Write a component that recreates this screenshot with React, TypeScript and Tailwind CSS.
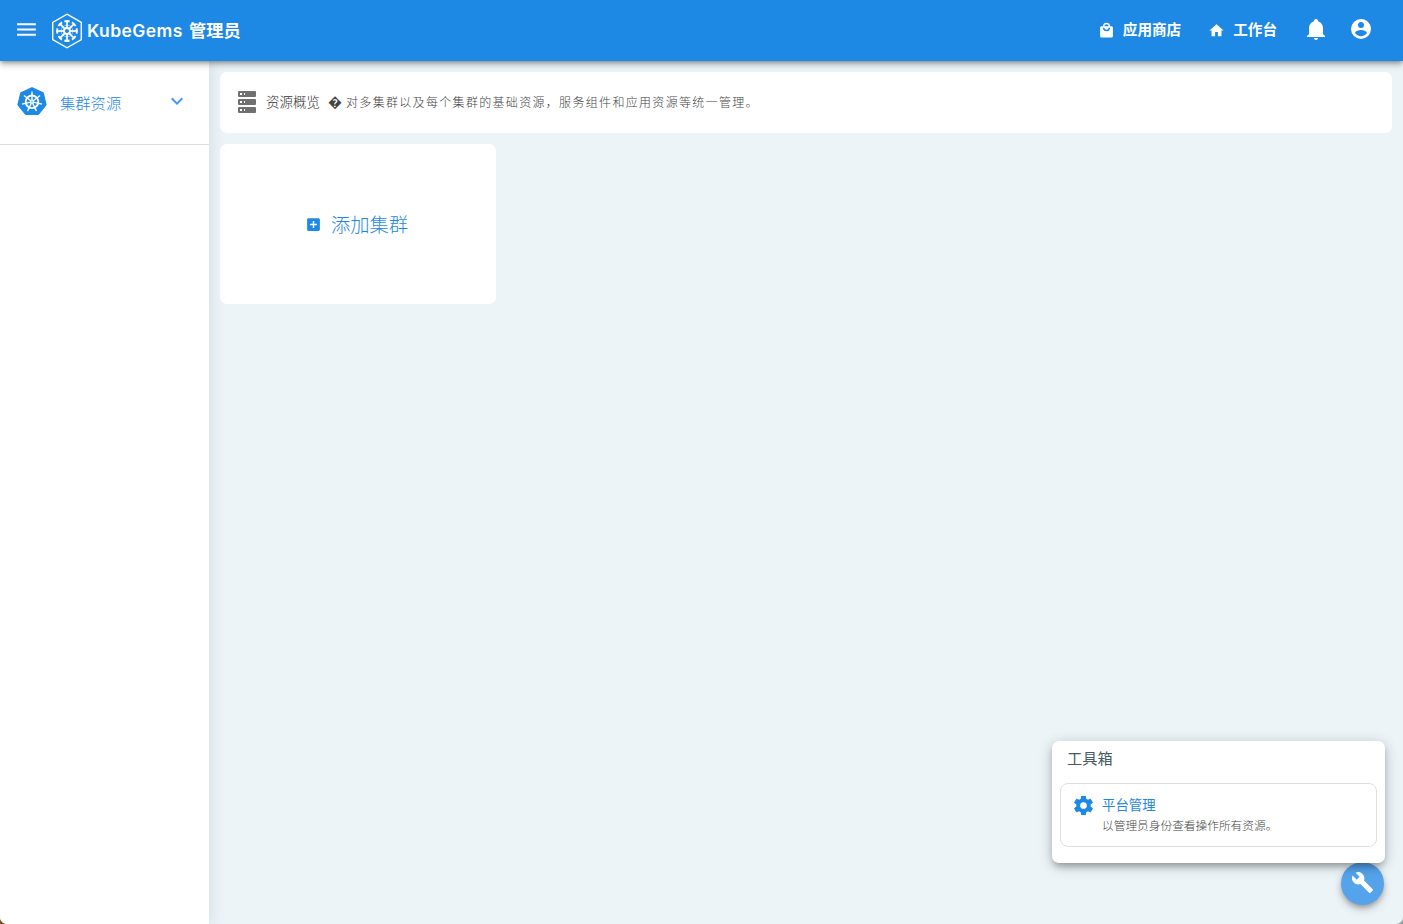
import clsx from 'clsx';

const icons = {
  menu: 'M3,6H21V8H3V6M3,11H21V13H3V11M3,16H21V18H3V16Z',
  shopping:
    'M12,13A5,5 0 0,1 7,8H9A3,3 0 0,0 12,11A3,3 0 0,0 15,8H17A5,5 0 0,1 12,13M12,3A3,3 0 0,1 15,6H9A3,3 0 0,1 12,3M19,6H17A5,5 0 0,0 12,1A5,5 0 0,0 7,6H5C3.89,6 3,6.89 3,8V20A2,2 0 0,0 5,22H19A2,2 0 0,0 21,20V8C21,6.89 20.1,6 19,6Z',
  home: 'M10,20V14H14V20H19V12H22L12,3L2,12H5V20H10Z',
  bell: 'M21,19V20H3V19L5,17V11C5,7.9 7.03,5.17 10,4.29C10,4.19 10,4.1 10,4A2,2 0 0,1 12,2A2,2 0 0,1 14,4C14,4.1 14,4.19 14,4.29C16.97,5.17 19,7.9 19,11V17L21,19M14,21A2,2 0 0,1 12,23A2,2 0 0,1 10,21',
  account:
    'M12,19.2C9.5,19.2 7.29,17.92 6,16C6.03,14 10,12.9 12,12.9C14,12.9 17.97,14 18,16C16.71,17.92 14.5,19.2 12,19.2M12,5A3,3 0 0,1 15,8A3,3 0 0,1 12,11A3,3 0 0,1 9,8A3,3 0 0,1 12,5M12,2A10,10 0 0,0 2,12A10,10 0 0,0 12,22A10,10 0 0,0 22,12C22,6.47 17.5,2 12,2Z',
  chevronDown: 'M7.41,8.58L12,13.17L16.59,8.58L18,10L12,16L6,10L7.41,8.58Z',
  server:
    'M4,1H20A1,1 0 0,1 21,2V6A1,1 0 0,1 20,7H4A1,1 0 0,1 3,6V2A1,1 0 0,1 4,1M4,9H20A1,1 0 0,1 21,10V14A1,1 0 0,1 20,15H4A1,1 0 0,1 3,14V10A1,1 0 0,1 4,9M4,17H20A1,1 0 0,1 21,18V22A1,1 0 0,1 20,23H4A1,1 0 0,1 3,22V18A1,1 0 0,1 4,17M9,5H10V3H9V5M9,13H10V11H9V13M9,21H10V19H9V21M5,3V5H7V3H5M5,11V13H7V11H5M5,19V21H7V19H5Z',
  plusBox:
    'M17,13H13V17H11V13H7V11H11V7H13V11H17M19,3H5C3.89,3 3,3.89 3,5V19A2,2 0 0,0 5,21H19A2,2 0 0,0 21,19V5C21,3.89 20.1,3 19,3Z',
  cog: 'M12,15.5A3.5,3.5 0 0,1 8.5,12A3.5,3.5 0 0,1 12,8.5A3.5,3.5 0 0,1 15.5,12A3.5,3.5 0 0,1 12,15.5M19.43,12.97C19.47,12.65 19.5,12.33 19.5,12C19.5,11.67 19.47,11.34 19.43,11L21.54,9.37C21.73,9.22 21.78,8.95 21.66,8.73L19.66,5.27C19.54,5.05 19.27,4.96 19.05,5.05L16.56,6.05C16.04,5.66 15.5,5.32 14.87,5.07L14.5,2.42C14.46,2.18 14.25,2 14,2H10C9.75,2 9.54,2.18 9.5,2.42L9.13,5.07C8.5,5.32 7.96,5.66 7.44,6.05L4.95,5.05C4.73,4.96 4.46,5.05 4.34,5.27L2.34,8.73C2.21,8.95 2.27,9.22 2.46,9.37L4.57,11C4.53,11.34 4.5,11.67 4.5,12C4.5,12.33 4.53,12.65 4.57,12.97L2.46,14.63C2.27,14.78 2.21,15.05 2.34,15.27L4.34,18.73C4.46,18.95 4.73,19.03 4.95,18.95L7.44,17.94C7.96,18.34 8.5,18.68 9.13,18.93L9.5,21.58C9.54,21.82 9.75,22 10,22H14C14.25,22 14.46,21.82 14.5,21.58L14.87,18.93C15.5,18.67 16.04,18.34 16.56,17.94L19.05,18.95C19.27,19.03 19.54,18.95 19.66,18.73L21.66,15.27C21.78,15.05 21.73,14.78 21.54,14.63L19.43,12.97Z',
  wrench:
    'M22.7,19L13.6,9.9C14.5,7.6 14,4.9 12.1,3C10.1,1 7.1,0.6 4.7,1.7L9,6L6,9L1.6,4.7C0.4,7.1 0.9,10.1 2.9,12.1C4.8,14 7.5,14.5 9.8,13.6L18.9,22.7C19.3,23.1 19.9,23.1 20.3,22.7L22.6,20.4C23.1,20 23.1,19.3 22.7,19Z',
};

interface IconProps {
  name: keyof typeof icons;
  className?: string;
}

function Icon({ name, className }: IconProps) {
  return (
    <svg viewBox="0 0 24 24" fill="currentColor" className={clsx('shrink-0', className)}>
      <path d={icons[name]} />
    </svg>
  );
}

const eighths = [0, 45, 90, 135, 180, 225, 270, 315];
const sevenths = [0, 1, 2, 3, 4, 5, 6].map((i) => (i * 360) / 7);

function Logo() {
  return (
    <svg viewBox="0 0 32 36" className="h-9 w-8 shrink-0" fill="none" stroke="white">
      <path d="M16 1.2 L30.3 9.3 V26.7 L16 34.8 L1.7 26.7 V9.3 Z" strokeWidth="1.4" />
      <circle cx="16" cy="18" r="3" strokeWidth="1.8" />
      {eighths.map((angle) => (
        <g key={angle} transform={`rotate(${angle} 16 18)`}>
          <path d="M16 15.4 V8.4" strokeWidth="1.7" />
          <path d="M13.4 8.5 Q16 7.6 18.6 8.5" strokeWidth="1.9" />
        </g>
      ))}
      <path d="M16 11.8 L20.4 13.6 L22.2 18 L20.4 22.4 L16 24.2 L11.6 22.4 L9.8 18 L11.6 13.6 Z" strokeWidth="0.8" strokeOpacity="0.6" />
    </svg>
  );
}

function KubernetesIcon() {
  return (
    <svg viewBox="0 0 30 29" className="h-[29px] w-[30px] shrink-0">
      <path
        d="M15 1.5 L25.6 6.4 L28.3 17.6 L21 26.8 H9 L1.7 17.6 L4.4 6.4 Z"
        fill="#1e88e5"
        stroke="#1e88e5"
        strokeWidth="2.6"
        strokeLinejoin="round"
      />
      <g fill="none" stroke="white">
        <circle cx="15" cy="14.8" r="6.3" strokeWidth="1.8" />
        {sevenths.map((angle) => (
          <path key={angle} d="M15 13.6 V4.6" strokeWidth="1.4" transform={`rotate(${angle} 15 14.8)`} />
        ))}
      </g>
      <circle cx="15" cy="14.8" r="2" fill="white" />
      <circle cx="15" cy="14.8" r="0.7" fill="#1e88e5" />
    </svg>
  );
}

function Header() {
  return (
    <header className="relative z-20 flex h-[61px] shrink-0 items-center bg-[#1e88e5] pb-[2px] text-white shadow-[0_2px_4px_-1px_rgba(0,0,0,0.3),0_4px_6px_rgba(0,0,0,0.22)]">
      <Icon name="menu" className="ml-[14px] h-[25px] w-[25px]" />
      <div className="mt-[2px] ml-[12px]">
        <Logo />
      </div>
      <span className="mt-[2px] ml-[4px] w-[102px] font-['Inter'] text-[17.5px] leading-6 font-semibold tracking-[0.4px]">
        KubeGems
      </span>
      <span className="mt-px text-[17.2px] leading-6 font-bold">管理员</span>
      <nav className="mb-px ml-auto flex items-center text-[14.6px] font-bold">
        <a className="flex items-center leading-6">
          <Icon name="shopping" className="mt-[2px] mr-[8px] h-[17px] w-[17px]" />
          应用商店
        </a>
        <a className="ml-[27px] flex items-center leading-6">
          <Icon name="home" className="mt-[2px] mr-[8px] h-[17px] w-[17px]" />
          工作台
        </a>
      </nav>
      <Icon name="bell" className="mb-px ml-[27px] h-[24px] w-[24px]" />
      <Icon name="account" className="mr-[30px] mb-px ml-[21px] h-[24px] w-[24px]" />
    </header>
  );
}

function Sidebar() {
  return (
    <aside className="relative z-10 w-[209px] shrink-0 bg-white shadow-[2px_0_14px_rgba(60,80,90,0.13)]">
      <div className="flex h-[84px] items-center border-b border-[#dedede] pb-[3px] pl-[17px] text-[#1e88e5]">
        <KubernetesIcon />
        <span className="mt-[3px] ml-[13px] text-[15.3px] font-light">集群资源</span>
        <Icon name="chevronDown" className="ml-auto mr-[20px] h-[24px] w-[24px] text-[#409bf6]" />
      </div>
    </aside>
  );
}

function Toolbox() {
  return (
    <div className="absolute right-[18px] bottom-[61px] h-[122px] w-[333px] rounded-[7px] bg-white px-2 shadow-[0_5px_6px_-2px_rgba(0,0,0,0.25),0_3px_14px_rgba(0,0,0,0.24)]">
      <h2 className="h-[42px] pt-[4px] pl-[7px] text-[15.2px] leading-6 text-[#455a64]">工具箱</h2>
      <div className="flex h-[64px] rounded-[8px] border border-[#dedede] pt-[10px] pl-[11px]">
        <Icon name="cog" className="h-[23px] w-[23px] text-[#1e88e5]" />
        <div className="-mt-px ml-[7px]">
          <div className="text-[13.4px] leading-[22px] text-[#1e88e5]">平台管理</div>
          <div className="text-[11.7px] leading-[20px] font-light text-[#444]">以管理员身份查看操作所有资源。</div>
        </div>
      </div>
    </div>
  );
}

export default function App() {
  return (
    <div className="h-[924px] w-[1403px] bg-linear-to-r from-[#7a4a1c] to-[#9a9fa2]">
      <div className="relative flex h-full flex-col overflow-hidden rounded-b-[7px] bg-[#ecf4f8] font-['Noto_Sans_CJK_SC',sans-serif]">
        <Header />
        <div className="flex min-h-0 flex-1">
          <Sidebar />
          <main className="flex-1 p-[11px]">
            <div className="flex h-[61px] items-center rounded-[7px] bg-white pb-[2px] pl-[15px] text-[#555]">
              <Icon name="server" className="h-[24px] w-[24px] text-[#707070]" />
              <span className="ml-[7px] text-[13.5px] font-light text-[#333]">资源概览</span>
              <span className="ml-[8px] w-[18px] text-[14px] text-[#444]">�</span>
              <span className="text-[12px] font-light tracking-[1.32px] text-[#444]">
                对多集群以及每个集群的基础资源，服务组件和应用资源等统一管理。
              </span>
            </div>
            <button className="mt-[11px] flex h-[160px] w-[276px] items-center justify-center rounded-[7px] bg-white pr-[3px] text-[#1e88e5]">
              <Icon name="plusBox" className="mr-[9px] h-[17px] w-[17px]" />
              <span className="text-[19.3px] font-light">添加集群</span>
            </button>
          </main>
        </div>
        <button className="absolute right-[19px] bottom-[19px] flex h-[43px] w-[43px] items-center justify-center rounded-full bg-[#54a3eb] pb-[2px] text-white shadow-[0_3px_5px_-1px_rgba(0,0,0,0.25),0_4px_10px_rgba(0,0,0,0.2)]">
          <Icon name="wrench" className="h-[23px] w-[23px]" />
        </button>
        <Toolbox />
      </div>
    </div>
  );
}
